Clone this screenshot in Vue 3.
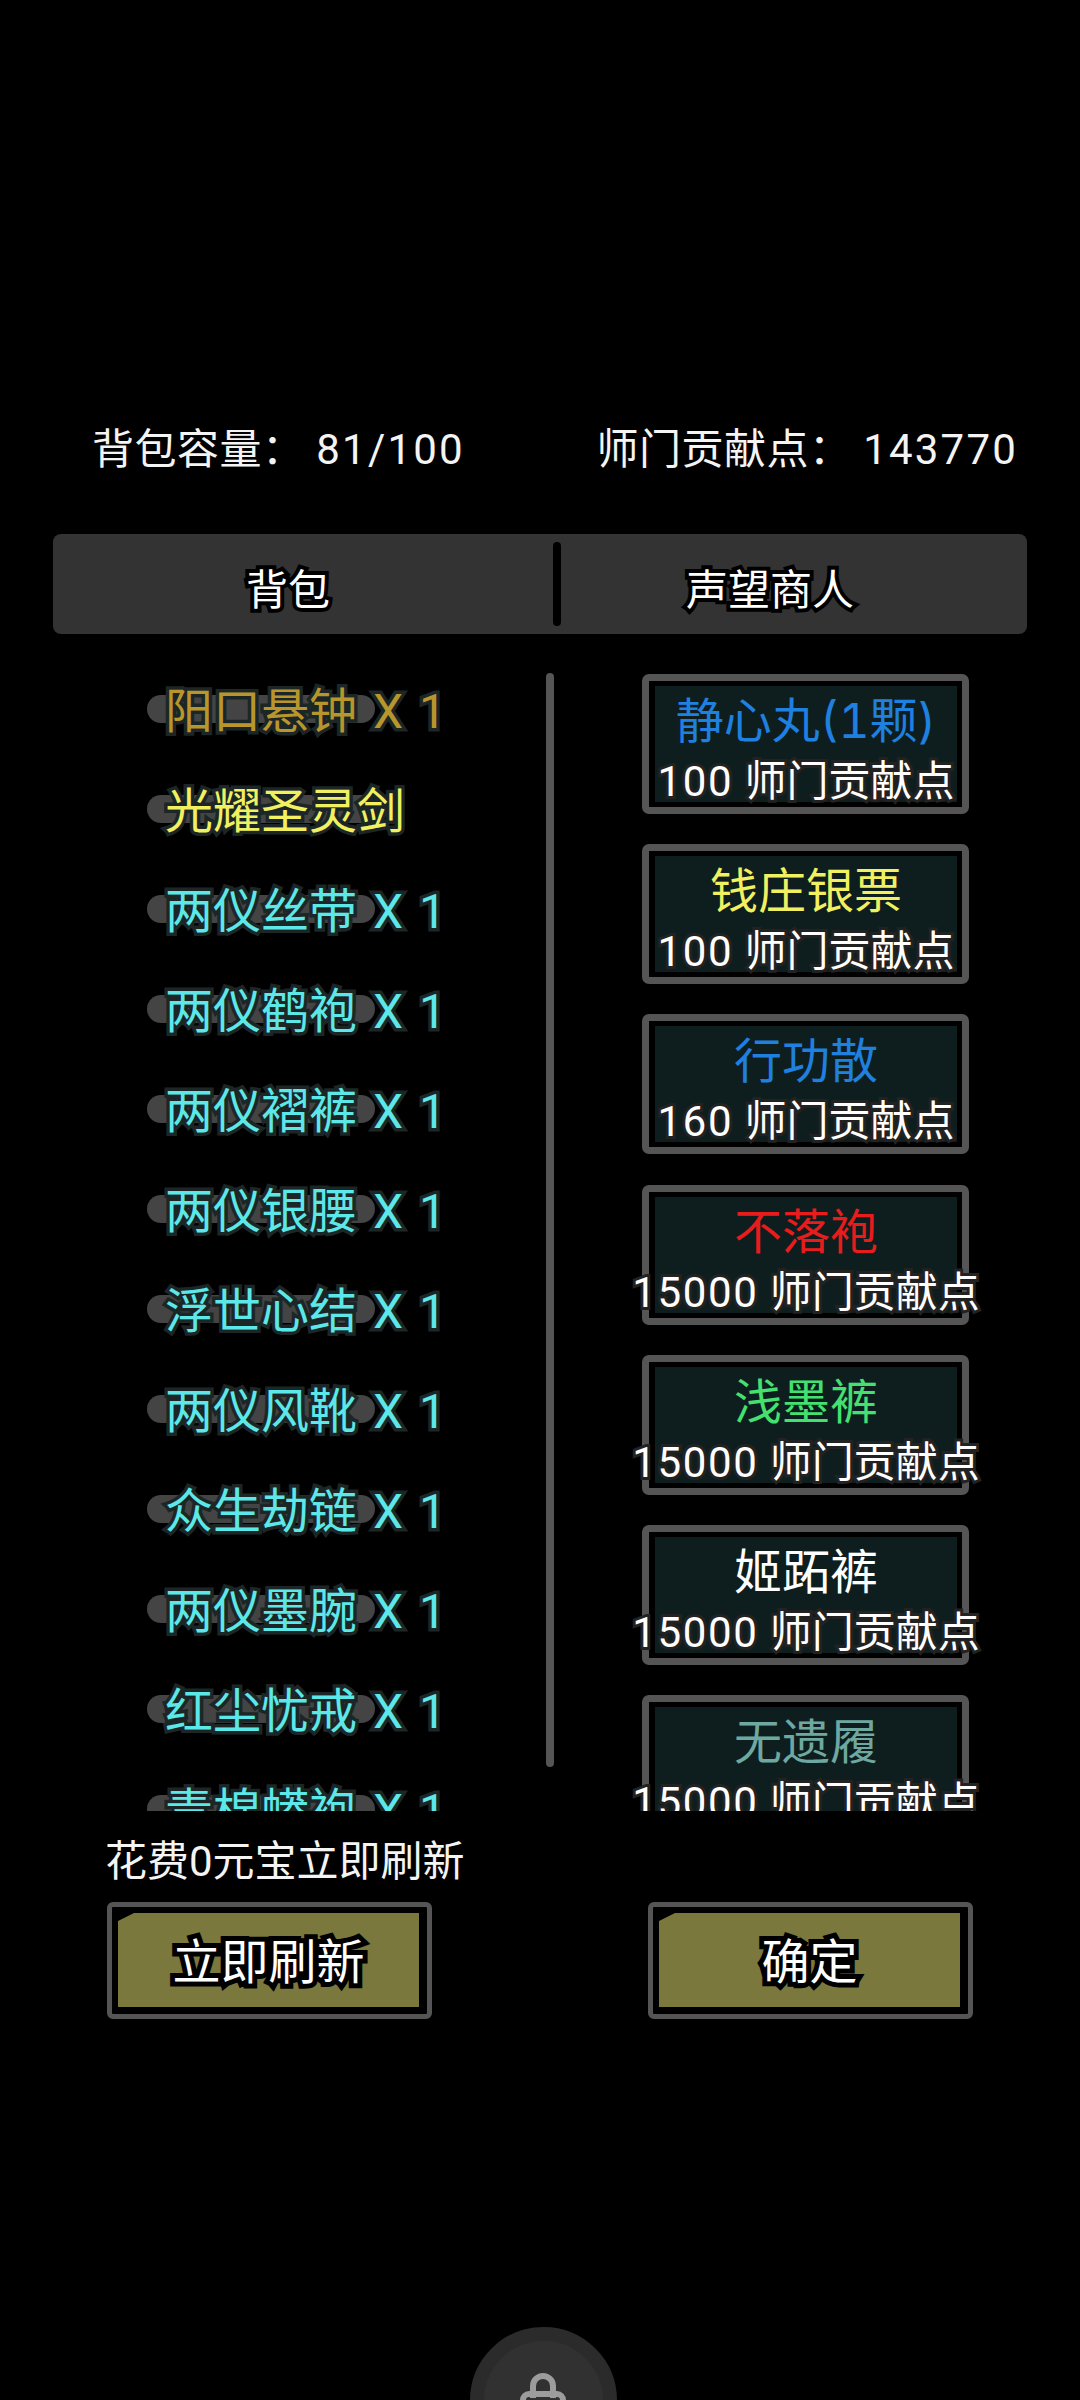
<script setup>
const items = [
  { name: '阳口悬钟 X 1', color: '#b8962c' },
  { name: '光耀圣灵剑', color: '#f0f060' },
  { name: '两仪丝带 X 1', color: '#5ce8e8' },
  { name: '两仪鹤袍 X 1', color: '#5ce8e8' },
  { name: '两仪褶裤 X 1', color: '#5ce8e8' },
  { name: '两仪银腰 X 1', color: '#5ce8e8' },
  { name: '浮世心结 X 1', color: '#5ce8e8' },
  { name: '两仪风靴 X 1', color: '#5ce8e8' },
  { name: '众生劫链 X 1', color: '#5ce8e8' },
  { name: '两仪墨腕 X 1', color: '#5ce8e8' },
  { name: '红尘忧戒 X 1', color: '#5ce8e8' },
  { name: '青棉蟒袍 X 1', color: '#5ce8e8' }
]
const goods = [
  { name: '静心丸(1颗)', price: 100, color: '#1f80e0' },
  { name: '钱庄银票', price: 100, color: '#f0f060' },
  { name: '行功散', price: 160, color: '#1f80e0' },
  { name: '不落袍', price: 15000, color: '#e81c1c' },
  { name: '浅墨裤', price: 15000, color: '#45e070' },
  { name: '姬跖裤', price: 15000, color: '#ffffff' },
  { name: '无遗履', price: 15000, color: '#6fa8a0' }
]
</script>

<template>
  <div class="screen">
    <div class="stats">
      <span>背包容量：&nbsp;<span class="num">81/100</span></span>
      <span>师门贡献点：&nbsp;<span class="num">143770</span></span>
    </div>

    <div class="tabs">
      <div class="tab tab-left"><span class="outlined">背包</span></div>
      <div class="tab-divider"></div>
      <div class="tab tab-right"><span class="outlined">声望商人</span></div>
    </div>

    <div class="panels">
      <div class="bag">
        <div v-for="item in items" :key="item.name" class="bag-row">
          <span class="pill"></span>
          <span class="bag-name" :style="{ color: item.color }">{{ item.name }}</span>
        </div>
        <div class="scrollbar"></div>
      </div>
      <div class="shop">
        <div v-for="good in goods" :key="good.name" class="card">
          <div class="card-inner">
            <div class="card-title" :style="{ color: good.color }">{{ good.name }}</div>
            <div class="card-price"><span class="num">{{ good.price }}</span> 师门贡献点</div>
          </div>
        </div>
      </div>
    </div>

    <div class="refresh-note">花费0元宝立即刷新</div>

    <div class="actions">
      <div class="btn"><div class="btn-fill"><span class="outlined big">立即刷新</span></div></div>
      <div class="btn"><div class="btn-fill"><span class="outlined big">确定</span></div></div>
    </div>

    <div class="lock">
      <svg class="lock-icon" width="60" height="60" viewBox="0 0 60 60" fill="none" stroke="#9c9c9c" stroke-width="6">
        <path d="M20 28 V16 a10 10 0 0 1 20 0 V28" />
        <rect x="10" y="24" width="40" height="32" rx="6" />
      </svg>
    </div>
  </div>
</template>

<style>
html, body { margin: 0; background: #000; }
</style>

<style scoped>
.screen {
  position: relative;
  width: 1080px;
  height: 2400px;
  overflow: hidden;
  background: #000;
  color: #fff;
  font-family: Inter, "Noto Sans CJK SC", sans-serif;
  font-variant-numeric: tabular-nums;
  padding-top: 419px;
  box-sizing: border-box;
}
.num {
  font-family: Roboto, "Noto Sans CJK SC", sans-serif;
  letter-spacing: 1.6px;
}
.stats {
  display: flex;
  justify-content: space-between;
  padding: 0 62px 0 92px;
  font-size: 42px;
  line-height: 60px;
  height: 60px;
  color: #f4f4f4;
  letter-spacing: 0.5px;
}
.stats .num { letter-spacing: 2.2px; }
.tabs {
  display: flex;
  align-items: center;
  height: 100px;
  margin: 55px 53px 0;
  background: #333;
  border-radius: 8px;
  font-size: 42px;
}
.tab {
  display: flex;
  justify-content: center;
  padding-top: 11px;
  line-height: 60px;
}
.tab-left { width: 470px; box-sizing: border-box; }
.tab-right { flex: 1; padding-right: 48px; box-sizing: border-box; }
.tab-divider {
  width: 8px;
  height: 84px;
  margin-left: 30px;
  background: #000;
  border-radius: 4px;
}
.outlined {
  -webkit-text-stroke: 8px #000;
  paint-order: stroke fill;
  color: #fff;
}
.outlined.big { -webkit-text-stroke-width: 10px; font-size: 48px; }
.panels {
  position: relative;
  display: flex;
  height: 1153px;
  margin-top: 24px;
  overflow: hidden;
}
.bag {
  width: 642px;
  flex: none;
}
.bag-row {
  position: relative;
  height: 100px;
  display: flex;
  align-items: center;
  padding-left: 165px;
  padding-bottom: 3px;
  box-sizing: border-box;
  font-size: 48px;
}
.pill {
  position: absolute;
  left: 147px;
  top: 37px;
  width: 228px;
  height: 28px;
  border-radius: 14px;
  background: #444;
}
.bag-name {
  position: relative;
  font-family: Roboto, "Noto Sans CJK SC", sans-serif;
  word-spacing: 4px;
  white-space: pre;
  -webkit-text-stroke: 7px #1c2626;
  paint-order: stroke fill;
}
.scrollbar {
  position: absolute;
  left: 546px;
  top: 15px;
  width: 8px;
  height: 1094px;
  border-radius: 4px;
  background: #555;
}
.shop {
  display: flex;
  flex-direction: column;
  gap: 30.2px;
  padding-top: 16px;
}
.card {
  width: 327px;
  height: 140px;
  flex: none;
  box-sizing: border-box;
  padding: 5px 5px 5px 6px;
  border: 7px solid #555;
  border-radius: 7px;
}
.card-inner {
  height: 116px;
  background: #0e1e1e;
  display: flex;
  flex-direction: column;
  align-items: center;
  padding-top: 5px;
  box-sizing: border-box;
}
.card-title {
  font-size: 48px;
  line-height: 60px;
  white-space: nowrap;
  -webkit-text-stroke: 5px #0e1e1e;
  paint-order: stroke fill;
}
.card-price {
  font-size: 42px;
  line-height: 60px;
  white-space: nowrap;
  -webkit-text-stroke: 6px #222;
  paint-order: stroke fill;
}
.refresh-note {
  margin-top: 21px;
  padding-left: 105px;
  font-family: Roboto, "Noto Sans CJK SC", sans-serif;
  font-size: 42px;
  line-height: 60px;
  color: #f4f4f4;
}
.actions {
  display: flex;
  gap: 216px;
  padding-left: 107px;
  margin-top: 10px;
}
.btn {
  width: 325px;
  height: 117px;
  box-sizing: border-box;
  border: 5px solid #555;
  border-radius: 6px;
  padding: 6px 8px 7px 6px;
}
.btn-fill {
  height: 94px;
  background: #7a783c;
  clip-path: polygon(0 8px, 16px 0, 100% 0, 100% 100%, 0 100%);
  display: flex;
  align-items: center;
  justify-content: center;
  line-height: 60px;
  padding-top: 4px;
  box-sizing: border-box;
}
.lock {
  position: absolute;
  left: 470px;
  top: 2327px;
  width: 147px;
  height: 147px;
  box-sizing: border-box;
  border-radius: 50%;
  background: #313131;
  border: 14px solid #2b2b2b;
}
.lock-icon {
  position: absolute;
  left: 29px;
  top: 29px;
}
</style>
